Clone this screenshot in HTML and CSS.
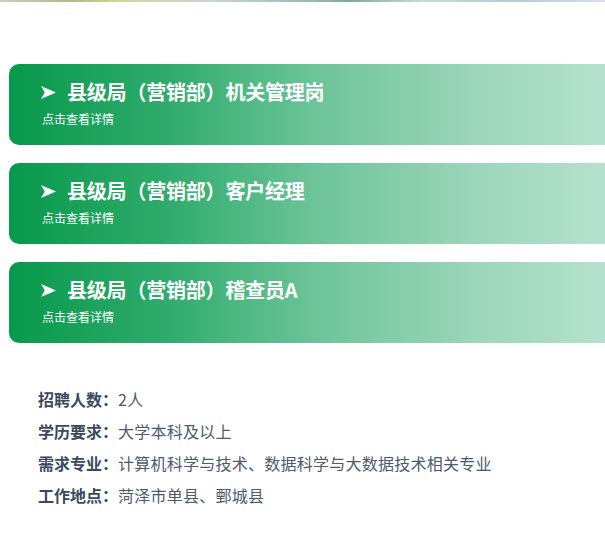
FILE: index.html
```html
<!DOCTYPE html>
<html lang="zh-CN">
<head>
<meta charset="utf-8">
<link rel="stylesheet" href="styles.css">
</head>
<body>
<div class="banner-edge"></div>
<main class="page">
  <section class="cards">
    <div class="card">
      <div class="card-title">
        <svg class="arrow" viewBox="0 0 14 12" width="15" height="13"><path d="M0 0 L14 6 L0 12 L3.5 6 Z" fill="#fff"/></svg>
        <span>县级局（营销部）机关管理岗</span>
      </div>
      <div class="card-sub">点击查看详情</div>
    </div>
    <div class="card">
      <div class="card-title">
        <svg class="arrow" viewBox="0 0 14 12" width="15" height="13"><path d="M0 0 L14 6 L0 12 L3.5 6 Z" fill="#fff"/></svg>
        <span>县级局（营销部）客户经理</span>
      </div>
      <div class="card-sub">点击查看详情</div>
    </div>
    <div class="card">
      <div class="card-title">
        <svg class="arrow" viewBox="0 0 14 12" width="15" height="13"><path d="M0 0 L14 6 L0 12 L3.5 6 Z" fill="#fff"/></svg>
        <span>县级局（营销部）稽查员A</span>
      </div>
      <div class="card-sub">点击查看详情</div>
    </div>
  </section>
  <section class="info">
    <div class="row"><span class="label">招聘人数：</span><span class="value">2人</span></div>
    <div class="row"><span class="label">学历要求：</span><span class="value">大学本科及以上</span></div>
    <div class="row"><span class="label">需求专业：</span><span class="value">计算机科学与技术、数据科学与大数据技术相关专业</span></div>
    <div class="row"><span class="label">工作地点：</span><span class="value">菏泽市单县、鄄城县</span></div>
  </section>
</main>
</body>
</html>
```
FILE: styles.css
```css
html, body {
  margin: 0;
  padding: 0;
  background: #fff;
  overflow: hidden;
}
body {
  font-family: "Noto Sans CJK SC", "Noto Sans", sans-serif;
}
.banner-edge {
  height: 2px;
  background: linear-gradient(to right, #c9cfc0 0%, #b9b48a 12%, #d8d3a6 20%, #c8d6cf 35%, #9fbcb9 50%, #7ea9a6 58%, #c9dcdc 70%, #b8c9d4 85%, #d5e0ea 100%);
}
.page {
  padding-top: 62px;
}
.cards {
  display: flex;
  flex-direction: column;
  gap: 18px;
  padding-left: 9px;
}
.card {
  height: 81px;
  box-sizing: border-box;
  margin-right: -30px;
  border-radius: 10px;
  background: linear-gradient(to right, #07994b 0%, #2fab6c 25%, #6fc59b 50%, #9dd6bb 75%, #bae4d2 100%);
  padding: 14px 0 0 31px;
  color: #fff;
}
.card-title {
  display: flex;
  align-items: center;
  gap: 11px;
  font-size: 20px;
  font-weight: 700;
  line-height: 28px;
  letter-spacing: -0.2px;
}
.arrow {
  flex: none;
  margin-left: 1px;
}
.card-sub {
  font-size: 12px;
  line-height: 16px;
  margin-top: 5px;
  padding-left: 2px;
}
.info {
  margin-top: 40px;
  padding-left: 38px;
  font-size: 16px;
  line-height: 32px;
}
.label {
  color: #3a4a5e;
  font-weight: 700;
}
.value {
  color: #4b5a6c;
  letter-spacing: 0.25px;
}
```
